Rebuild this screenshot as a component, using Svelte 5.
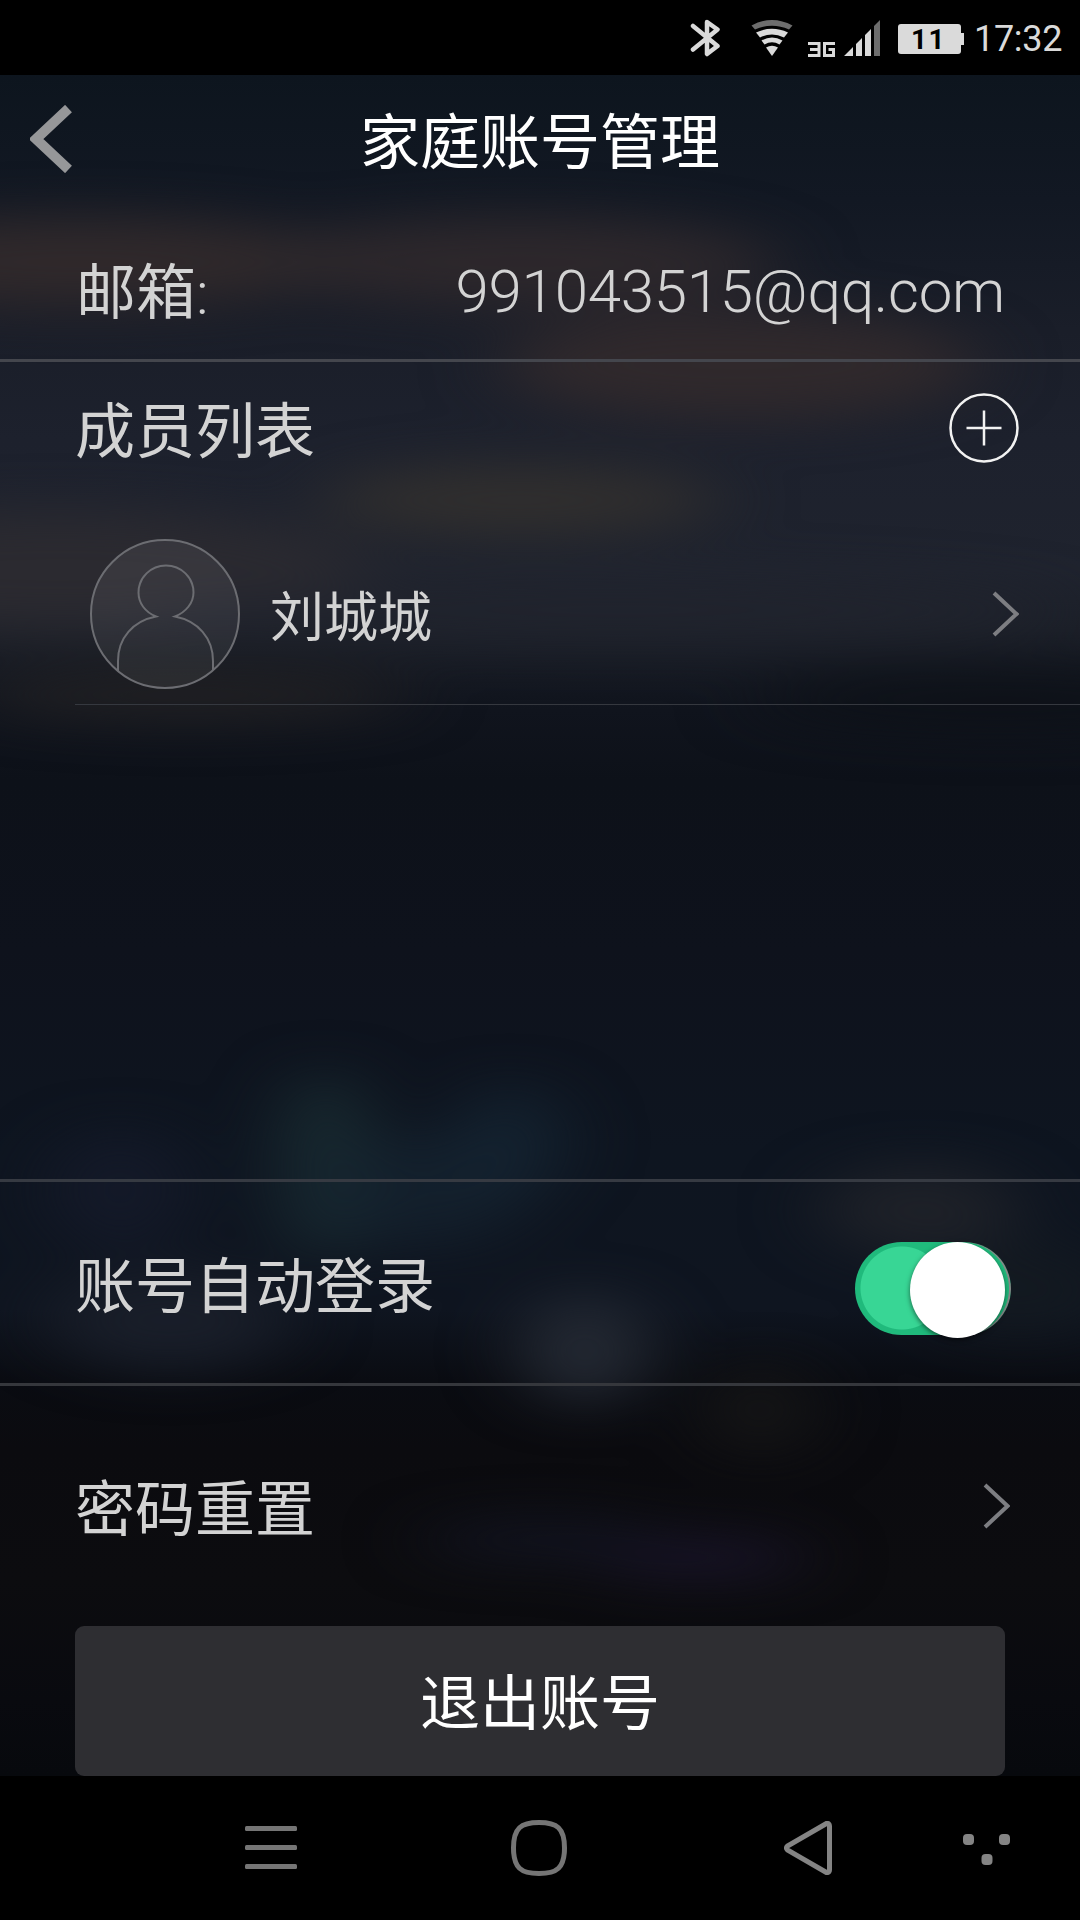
<script>
  let autoLogin = $state(true);
  const members = [{ name: '刘城城' }];
  // Soft patches of light behind the page: x, y, width, height, colour, opacity
  const glows = [
    [80, 262, 560, 90, '#30292b', 1],
    [520, 262, 520, 90, '#30292c', 0.9],
    [740, 365, 480, 110, '#30292c', 1],
    [520, 500, 400, 70, '#312f2e', 1],
    [60, 570, 620, 120, '#2b2a30', 1],
    [620, 610, 900, 70, '#22252f', 0.7],
    [190, 695, 440, 50, '#222123', 1],
    [1000, 700, 500, 60, '#0c1016', 0.8],
    [325, 1165, 90, 190, '#1a2c32', 0.9],
    [420, 1190, 220, 110, '#162330', 0.7],
    [510, 1140, 110, 110, '#152634', 0.7],
    [585, 1350, 130, 110, '#262b35', 0.9],
    [170, 1320, 240, 100, '#191e29', 1],
    [920, 1210, 200, 90, '#1e2128', 1],
    [1020, 1290, 200, 90, '#141a21', 0.8],
    [120, 1190, 140, 120, '#151a2a', 0.8],
    [700, 1558, 220, 40, '#19142a', 1],
    [540, 1540, 240, 40, '#121421', 1],
    [760, 1410, 110, 90, '#151516', 1]
  ];
</script>

{#snippet chevron()}
  <svg class="chevron" width="28" height="46" viewBox="0 0 28 46"><path d="M3 2 25.500 23 3 44" /></svg>
{/snippet}

<div class="screen">
  <svg class="backdrop" width="1080" height="1701" viewBox="0 75 1080 1701" aria-hidden="true">
    <defs>
      <filter id="soft" filterUnits="userSpaceOnUse" x="-300" y="0" width="1700" height="1900" color-interpolation-filters="sRGB">
        <feGaussianBlur stdDeviation="38 24" />
      </filter>
    </defs>
    <g filter="url(#soft)">
      {#each glows as [x, y, w, h, c, o]}
        <ellipse cx={x} cy={y} rx={w / 2} ry={h / 2} fill={c} opacity={o} />
      {/each}
    </g>
  </svg>

  <div class="status">
    <svg class="bt" width="30" height="38" viewBox="0 0 30 38"><path d="M3 7 27.500 27 17 35V3L27.500 10.500 3 30.500" /></svg>
    <svg class="wifi" width="42" height="37" viewBox="0 0 42 37">
      <path class="dim" d="M.5 6.500Q21-4.500 41.500 6.500L38 10.500Q21 3 4 10.500Z" />
      <path d="M5 13.500Q21 6 37 13.500L33 18.500Q21 12.500 9 18.500Z" />
      <path d="M10.500 21.500Q21 15.500 31.500 21.500L28.500 25.500Q21 21 13.500 25.500Z" />
      <path d="M15 28.500Q21 25 27 28.500L21 37Z" />
    </svg>
    <svg class="net" width="28" height="15" viewBox="0 0 28 15"><path d="M0 1.500H11V13.500H0M2 7.500H11M27 1.500H16.500V13.500H25.500V7.500H20.500" /></svg>
    <svg class="signal" width="36" height="36" viewBox="0 0 36 36">
      <path d="M0 36 9 27V36ZM12 36V24L18 18V36ZM21 36V15L27 9V36Z" />
      <path class="dim" d="M30 36V6L36 0V36Z" />
    </svg>
    <div class="battery"><span>11</span></div>
    <time>17:32</time>
  </div>

  <main>
    <header>
      <svg class="back" width="42" height="68" viewBox="0 0 42 68"><path d="M38.500 3.500 6 34 38.500 64.500" /></svg>
      <h1>家庭账号管理</h1>
    </header>

    <section class="row mail"><span class="label">邮箱<span class="colon">:</span></span><span class="address">991043515@qq.com</span></section>

    <section class="members">
      <div class="row heading">
        <span>成员列表</span>
        <svg class="add" width="70" height="70" viewBox="0 0 70 70"><circle cx="35" cy="35" r="33.500" /><path d="M17.500 35H52.500M35 17.500V52.500" /></svg>
      </div>
      {#each members as m}
        <div class="member">
          <svg class="avatar" width="150" height="150" viewBox="0 0 150 150">
            <circle class="disc" cx="75" cy="75" r="74" />
            <path d="M28 132V122C28 99 43 82 66 77.500C55 73 48.500 64 48.500 53.500A27.500 27 0 0 1 103.500 53.500C103.500 64 96 73 85 77.500C108 82 123 99 123 122V131" />
          </svg>
          <span>{m.name}</span>
          {@render chevron()}
        </div>
      {/each}
    </section>

    <section class="row auto">
      <span>账号自动登录</span>
      <button class="toggle" class:on={autoLogin} aria-label="账号自动登录" onclick={() => (autoLogin = !autoLogin)}><i></i></button>
    </section>

    <section class="row reset"><span>密码重置</span>{@render chevron()}</section>

    <button class="logout">退出账号</button>
  </main>

  <nav>
    <svg class="menu" width="52" height="43" viewBox="0 0 52 43"><rect width="52" height="5" rx="1.500" /><rect y="19" width="52" height="5" rx="1.500" /><rect y="38" width="52" height="5" rx="1.500" /></svg>
    <svg class="home" width="56" height="56" viewBox="0 0 56 56"><path d="M28 2.500C46 2.500 53.500 8 53.500 28S46 53.500 28 53.500 2.500 48 2.500 28 10 2.500 28 2.500Z" /></svg>
    <svg class="prev" width="48" height="54" viewBox="0 0 48 54"><path d="M42.500 2.500 3.500 25Q1.500 27 3.500 29L42.500 51.500Q45.500 52 45.500 49V5Q45.500 2 42.500 2.500Z" /></svg>
    <svg class="dots" width="47" height="31" viewBox="0 0 47 31"><rect width="11" height="11" rx="4" /><rect x="36" width="11" height="11" rx="4" /><rect x="18.500" y="20" width="11" height="11" rx="4" /></svg>
  </nav>
</div>

<style>
  :global(body) { background: #000; }
  .screen {
    position: relative;
    display: flex;
    flex-direction: column;
    width: 1080px;
    height: 1920px;
    overflow: hidden;
    background: linear-gradient(#0d151e 75px, #121823 200px, #1a1e29 330px, #1d212d 440px, #1f232e 570px, #1b1f28 630px, #10141d 710px, #0d1119 780px, #0e121c 950px, #0e1520 1150px, #0f1520 1310px, #0a0c12 1380px, #0b0b0f 1450px, #0c0c0f 1580px, #090a0f 1700px, #07090d 1776px);
    color: #d3d3d3;
    font: 400 60px/72px Roboto, "Noto Sans CJK SC", sans-serif;
  }
  .backdrop { position: absolute; left: 0; top: 75px; }
  svg { display: block; flex: none; fill: none; }
  .status {
    position: relative;
    display: flex;
    height: 75px;
    padding-left: 690px;
    background: #000;
  }
  .status svg { fill: #dadada; }
  .status .dim { fill: #6d6d6d; }
  .bt { margin-top: 19px; }
  .status .bt { fill: none; stroke: #dadada; stroke-width: 4.500; stroke-linecap: round; stroke-linejoin: round; }
  .wifi { margin: 19px 0 0 31px; }
  .status .net { margin: 42px 0 0 15px; fill: none; stroke: #dadada; stroke-width: 3; }
  .signal { margin: 20px 0 0 8px; }
  .battery {
    position: relative;
    width: 63px;
    height: 30px;
    margin: 24px 0 0 18px;
    border-radius: 3px;
    background: #dadada;
    color: #000;
    font: 700 28px/31px Roboto, sans-serif;
    text-align: center;
  }
  .battery span { display: block; padding-right: 2px; letter-spacing: 1.500px; }
  .battery::after { content: ""; position: absolute; right: -3px; top: 9px; width: 3px; height: 12px; background: #dadada; }
  time { margin: 18px 0 0 13px; color: #dadada; font-size: 36px; line-height: 42px; letter-spacing: -0.300px; }
  main { position: relative; display: flex; flex-direction: column; height: 1701px; }
  header { display: grid; grid-template-columns: 100px 1fr 100px; height: 142px; }
  .back { margin: 30px 0 0 30px; stroke: #969799; stroke-width: 10; }
  h1 { margin: 33px 0 0; color: #fff; font-size: 60px; line-height: 72px; font-weight: 400; text-align: center; }
  .row { display: flex; justify-content: space-between; align-items: center; padding-left: 75px; }
  .mail { height: 134px; padding: 8px 75px 0 76px; border-bottom: 3px solid #44464d; }
  .label { padding-top: 3px; }
  .colon { font-weight: 300; }
  .address { font-weight: 300; letter-spacing: -0.250px; }
  .members { height: 817px; border-bottom: 3px solid #363a42; }
  .heading { height: 134px; padding: 4px 61px 0 75px; }
  .add { margin-bottom: 11px; stroke: #f2f2f2; stroke-width: 2.500; }
  .member { display: flex; align-items: center; height: 204px; margin-left: 75px; padding: 0 61px 0 15px; border-bottom: 1px solid #35383f; font-size: 54px; }
  .avatar { margin-top: 23px; stroke: #6c6d72; stroke-width: 2; }
  .disc { fill: #ffffff10; }
  .member span { flex: 1; margin: 34px 0 0 30px; }
  .member .chevron { margin-top: 23px; }
  .chevron { stroke: #7d7e82; stroke-width: 4; }
  .auto { height: 201px; padding-right: 69px; border-bottom: 3px solid #35373c; }
  .auto > span { padding-top: 10px; }
  .toggle {
    position: relative;
    width: 156px;
    height: 93px;
    margin-top: 11px;
    padding: 0;
    border: 0;
    border-radius: 47px;
    background: #777;
  }
  .toggle.on { background: radial-gradient(circle at 47px 46px, #38d695 41px, transparent 42px), #20ba7c; box-shadow: inset -2px 0 #888; }
  .toggle i { position: absolute; left: 55px; top: 0; width: 95px; height: 96px; border-radius: 50%; background: #fff; box-shadow: 0 2px 5px #0008; }
  .reset { height: 240px; padding-right: 70px; }
  .reset > span { padding-top: 9px; }
  .logout {
    width: 930px;
    height: 150px;
    margin: auto 75px 0;
    padding: 8px 0 0;
    border: 0;
    border-radius: 9px;
    background: #2e2e32;
    color: #fff;
    font: inherit;
  }
  nav { position: relative; display: flex; height: 144px; padding-left: 245px; background: #000; }
  nav svg { fill: #757575; }
  .menu { margin-top: 50px; }
  nav .home { margin: 44px 0 0 214px; fill: none; stroke: #757575; stroke-width: 5; }
  nav .prev { margin: 45px 0 0 217px; fill: none; stroke: #848484; stroke-width: 5; }
  nav .dots { margin: 58px 0 0 131px; fill: #848484; }
</style>
